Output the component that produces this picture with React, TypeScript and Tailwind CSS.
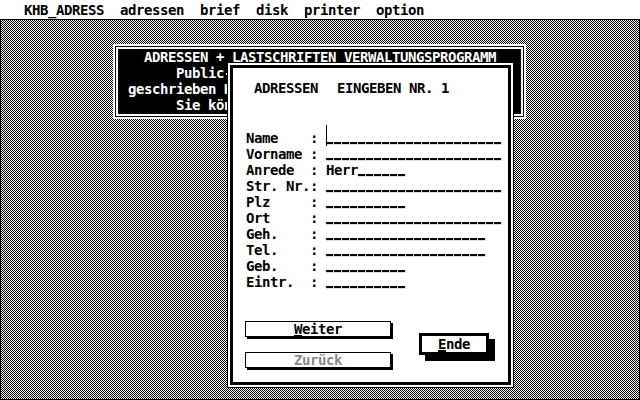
import React from "react";

const rows: { label: string; pre?: string; n: number; cursor?: boolean }[] = [
  { label: "Name    ", n: 22, cursor: true },
  { label: "Vorname ", n: 22 },
  { label: "Anrede  ", pre: "Herr", n: 6 },
  { label: "Str. Nr.", n: 22 },
  { label: "Plz     ", n: 10 },
  { label: "Ort     ", n: 22 },
  { label: "Geh.    ", n: 20 },
  { label: "Tel.    ", n: 20 },
  { label: "Geb.    ", n: 10 },
  { label: "Eintr.  ", n: 10 },
];

function Blanks({ n }: { n: number }) {
  return (
    <span className="text-[11.63px] leading-[0px] tracking-[1px] align-[3px] [text-shadow:0_1px_0_#000]">
      {"_".repeat(n)}
    </span>
  );
}

export default function App() {
  return (
    <div className="relative w-[640px] h-[400px] overflow-hidden flex flex-col bg-white text-black font-['DejaVu_Sans_Mono',monospace] font-bold text-[14px] leading-[16px] tracking-[-0.4287px]">
      {/* menu bar */}
      <div className="h-[20px] shrink-0 border-b border-black bg-white pt-[2px] whitespace-pre">
        {"   KHB_ADRESS  adressen  brief  disk  printer  option"}
      </div>
      {/* desktop */}
      <div className="flex-1 border border-t-0 border-black bg-[image:repeating-conic-gradient(#000_0_25%,#fff_0_50%)] bg-[length:2px_2px]" />

      {/* back dialog */}
      <div className="absolute left-[113px] top-[44px] w-[413px] bg-white p-[2px]">
        <div className="border border-black bg-white p-[2px]">
          <div className="h-[65px] bg-black text-white pl-[10px] whitespace-pre">
            <div className="h-[16px]">{"  ADRESSEN + LASTSCHRIFTEN VERWALTUNGSPROGRAMM"}</div>
            <div className="h-[16px]">{"      Public-"}</div>
            <div className="h-[16px]">{"geschrieben K"}</div>
            <div className="h-[16px]">{"      Sie kön"}</div>
          </div>
        </div>
      </div>

      {/* front dialog */}
      <div className="absolute left-[227px] top-[62px] w-[287px] h-[326px] border border-black bg-white p-[2px]">
        <div className="h-full border-[3px] border-black bg-white flex flex-col">
          <div className="pt-[12px] pl-[21px] h-[28px] flex flex-row gap-[19px]">
            <span>ADRESSEN</span>
            <span className="whitespace-pre">EINGEBEN NR. 1</span>
          </div>
          <div className="mt-[34px] pl-[13px] flex flex-col">
            {rows.map((r) => (
              <div key={r.label} className="relative h-[16px] whitespace-pre">
                {r.label + ": "}
                {r.pre}
                <Blanks n={r.n} />
                {r.cursor && (
                  <span className="absolute left-[80px] top-[-5px] h-[21px] w-px bg-black" />
                )}
              </div>
            ))}
          </div>
          <div className="mt-[31px] pl-[12px] flex flex-row items-start gap-[28px]">
            <div className="flex flex-col gap-[15px]">
              <div className="w-[146px] h-[16px] border border-black bg-white shadow-[2px_2px_0_#000] flex items-center justify-center leading-[14px]">
                <span>
                  <span className="underline decoration-[2px] underline-offset-[1px]">W</span>eiter
                </span>
              </div>
              <div className="w-[146px] h-[16px] border border-black bg-white shadow-[2px_2px_0_#000] flex items-center justify-center leading-[14px] text-[#8a8a8a]">
                Zurück
              </div>
            </div>
            <div className="mt-[12px] w-[70px] h-[22px] border-[3px] border-black bg-white shadow-[6px_6px_0_#000] flex items-center justify-center leading-[16px]">
              <span>
                <span className="underline decoration-[2px] underline-offset-[1px]">E</span>nde
              </span>
            </div>
          </div>
        </div>
      </div>
    </div>
  );
}
